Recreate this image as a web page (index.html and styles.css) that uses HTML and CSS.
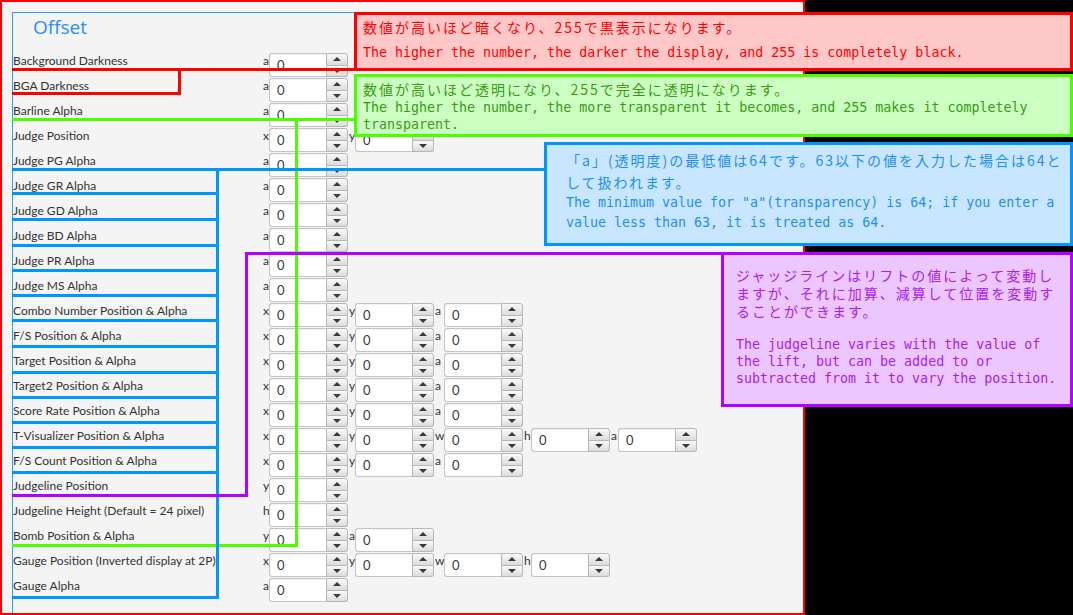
FILE: index.html
```html
<!DOCTYPE html>
<html lang="ja">
<head>
<meta charset="utf-8">
<title>Offset</title>
<link rel="stylesheet" href="styles.css">
</head>
<body>
<div class="stage">
  <div class="panel">
    <div class="pane">
      <h1 class="title">Offset</h1>
      <div class="form">
        <div class="row"><span class="name">Background Darkness</span><span class="sl">a</span><div class="spin"><div class="field">0</div><div class="btns"><div class="b up"><i></i></div><div class="b dn"><i></i></div></div></div></div>
        <div class="row"><span class="name">BGA Darkness</span><span class="sl">a</span><div class="spin"><div class="field">0</div><div class="btns"><div class="b up"><i></i></div><div class="b dn"><i></i></div></div></div></div>
        <div class="row"><span class="name">Barline Alpha</span><span class="sl">a</span><div class="spin"><div class="field">0</div><div class="btns"><div class="b up"><i></i></div><div class="b dn"><i></i></div></div></div></div>
        <div class="row"><span class="name">Judge Position</span><span class="sl">x</span><div class="spin"><div class="field">0</div><div class="btns"><div class="b up"><i></i></div><div class="b dn"><i></i></div></div></div><span class="sl">y</span><div class="spin"><div class="field">0</div><div class="btns"><div class="b up"><i></i></div><div class="b dn"><i></i></div></div></div></div>
        <div class="row"><span class="name">Judge PG Alpha</span><span class="sl">a</span><div class="spin"><div class="field">0</div><div class="btns"><div class="b up"><i></i></div><div class="b dn"><i></i></div></div></div></div>
        <div class="row"><span class="name">Judge GR Alpha</span><span class="sl">a</span><div class="spin"><div class="field">0</div><div class="btns"><div class="b up"><i></i></div><div class="b dn"><i></i></div></div></div></div>
        <div class="row"><span class="name">Judge GD Alpha</span><span class="sl">a</span><div class="spin"><div class="field">0</div><div class="btns"><div class="b up"><i></i></div><div class="b dn"><i></i></div></div></div></div>
        <div class="row"><span class="name">Judge BD Alpha</span><span class="sl">a</span><div class="spin"><div class="field">0</div><div class="btns"><div class="b up"><i></i></div><div class="b dn"><i></i></div></div></div></div>
        <div class="row"><span class="name">Judge PR Alpha</span><span class="sl">a</span><div class="spin"><div class="field">0</div><div class="btns"><div class="b up"><i></i></div><div class="b dn"><i></i></div></div></div></div>
        <div class="row"><span class="name">Judge MS Alpha</span><span class="sl">a</span><div class="spin"><div class="field">0</div><div class="btns"><div class="b up"><i></i></div><div class="b dn"><i></i></div></div></div></div>
        <div class="row"><span class="name">Combo Number Position &amp; Alpha</span><span class="sl">x</span><div class="spin"><div class="field">0</div><div class="btns"><div class="b up"><i></i></div><div class="b dn"><i></i></div></div></div><span class="sl">y</span><div class="spin"><div class="field">0</div><div class="btns"><div class="b up"><i></i></div><div class="b dn"><i></i></div></div></div><span class="sl">a</span><div class="spin"><div class="field">0</div><div class="btns"><div class="b up"><i></i></div><div class="b dn"><i></i></div></div></div></div>
        <div class="row"><span class="name">F/S Position &amp; Alpha</span><span class="sl">x</span><div class="spin"><div class="field">0</div><div class="btns"><div class="b up"><i></i></div><div class="b dn"><i></i></div></div></div><span class="sl">y</span><div class="spin"><div class="field">0</div><div class="btns"><div class="b up"><i></i></div><div class="b dn"><i></i></div></div></div><span class="sl">a</span><div class="spin"><div class="field">0</div><div class="btns"><div class="b up"><i></i></div><div class="b dn"><i></i></div></div></div></div>
        <div class="row"><span class="name">Target Position &amp; Alpha</span><span class="sl">x</span><div class="spin"><div class="field">0</div><div class="btns"><div class="b up"><i></i></div><div class="b dn"><i></i></div></div></div><span class="sl">y</span><div class="spin"><div class="field">0</div><div class="btns"><div class="b up"><i></i></div><div class="b dn"><i></i></div></div></div><span class="sl">a</span><div class="spin"><div class="field">0</div><div class="btns"><div class="b up"><i></i></div><div class="b dn"><i></i></div></div></div></div>
        <div class="row"><span class="name">Target2 Position &amp; Alpha</span><span class="sl">x</span><div class="spin"><div class="field">0</div><div class="btns"><div class="b up"><i></i></div><div class="b dn"><i></i></div></div></div><span class="sl">y</span><div class="spin"><div class="field">0</div><div class="btns"><div class="b up"><i></i></div><div class="b dn"><i></i></div></div></div><span class="sl">a</span><div class="spin"><div class="field">0</div><div class="btns"><div class="b up"><i></i></div><div class="b dn"><i></i></div></div></div></div>
        <div class="row"><span class="name">Score Rate Position &amp; Alpha</span><span class="sl">x</span><div class="spin"><div class="field">0</div><div class="btns"><div class="b up"><i></i></div><div class="b dn"><i></i></div></div></div><span class="sl">y</span><div class="spin"><div class="field">0</div><div class="btns"><div class="b up"><i></i></div><div class="b dn"><i></i></div></div></div><span class="sl">a</span><div class="spin"><div class="field">0</div><div class="btns"><div class="b up"><i></i></div><div class="b dn"><i></i></div></div></div></div>
        <div class="row"><span class="name">T-Visualizer Position &amp; Alpha</span><span class="sl">x</span><div class="spin"><div class="field">0</div><div class="btns"><div class="b up"><i></i></div><div class="b dn"><i></i></div></div></div><span class="sl">y</span><div class="spin"><div class="field">0</div><div class="btns"><div class="b up"><i></i></div><div class="b dn"><i></i></div></div></div><span class="sl">w</span><div class="spin"><div class="field">0</div><div class="btns"><div class="b up"><i></i></div><div class="b dn"><i></i></div></div></div><span class="sl">h</span><div class="spin"><div class="field">0</div><div class="btns"><div class="b up"><i></i></div><div class="b dn"><i></i></div></div></div><span class="sl">a</span><div class="spin"><div class="field">0</div><div class="btns"><div class="b up"><i></i></div><div class="b dn"><i></i></div></div></div></div>
        <div class="row"><span class="name">F/S Count Position &amp; Alpha</span><span class="sl">x</span><div class="spin"><div class="field">0</div><div class="btns"><div class="b up"><i></i></div><div class="b dn"><i></i></div></div></div><span class="sl">y</span><div class="spin"><div class="field">0</div><div class="btns"><div class="b up"><i></i></div><div class="b dn"><i></i></div></div></div><span class="sl">a</span><div class="spin"><div class="field">0</div><div class="btns"><div class="b up"><i></i></div><div class="b dn"><i></i></div></div></div></div>
        <div class="row"><span class="name">Judgeline Position</span><span class="sl">y</span><div class="spin"><div class="field">0</div><div class="btns"><div class="b up"><i></i></div><div class="b dn"><i></i></div></div></div></div>
        <div class="row"><span class="name">Judgeline Height (Default = 24 pixel)</span><span class="sl">h</span><div class="spin"><div class="field">0</div><div class="btns"><div class="b up"><i></i></div><div class="b dn"><i></i></div></div></div></div>
        <div class="row"><span class="name">Bomb Position &amp; Alpha</span><span class="sl">y</span><div class="spin"><div class="field">0</div><div class="btns"><div class="b up"><i></i></div><div class="b dn"><i></i></div></div></div><span class="sl">a</span><div class="spin"><div class="field">0</div><div class="btns"><div class="b up"><i></i></div><div class="b dn"><i></i></div></div></div></div>
        <div class="row"><span class="name">Gauge Position (Inverted display at 2P)</span><span class="sl">x</span><div class="spin"><div class="field">0</div><div class="btns"><div class="b up"><i></i></div><div class="b dn"><i></i></div></div></div><span class="sl">y</span><div class="spin"><div class="field">0</div><div class="btns"><div class="b up"><i></i></div><div class="b dn"><i></i></div></div></div><span class="sl">w</span><div class="spin"><div class="field">0</div><div class="btns"><div class="b up"><i></i></div><div class="b dn"><i></i></div></div></div><span class="sl">h</span><div class="spin"><div class="field">0</div><div class="btns"><div class="b up"><i></i></div><div class="b dn"><i></i></div></div></div></div>
        <div class="row"><span class="name">Gauge Alpha</span><span class="sl">a</span><div class="spin"><div class="field">0</div><div class="btns"><div class="b up"><i></i></div><div class="b dn"><i></i></div></div></div></div>
      </div>
    </div>
  </div>

  <!-- annotation connectors -->
  <div class="ln red-top"></div>
  <div class="ln red-box"></div>
  <div class="ln green-top"></div>
  <div class="ln green-box"></div>
  <div class="ln blue-top"></div>
  <div class="ln blue-box">
    <div class="cell s"></div>
    <div class="cell t"></div>
    <div class="cell t"></div>
    <div class="cell"></div>
    <div class="cell"></div>
    <div class="cell"></div>
    <div class="cell t"></div>
    <div class="cell t"></div>
    <div class="cell"></div>
    <div class="cell"></div>
    <div class="cell"></div>
    <div class="cell"></div>
  </div>
  <div class="ln purple-box"></div>
  <div class="ln purple-bottom"></div>

  <!-- annotation notes -->
  <div class="note note-red">
    <div class="jp">数値が高いほど暗くなり、255で黒表示になります。</div>
    <div class="en">The higher the number, the darker the display, and 255 is completely black.</div>
  </div>
  <div class="note note-green">
    <div class="jp">数値が高いほど透明になり、255で完全に透明になります。</div>
    <div class="en">The higher the number, the more transparent it becomes, and 255 makes it completely<br>transparent.</div>
  </div>
  <div class="note note-blue">
    <div class="jp">「a」(透明度)の最低値は64です。63以下の値を入力した場合は64と<br>して扱われます。</div>
    <div class="en">The minimum value for "a"(transparency) is 64; if you enter a<br>value less than 63, it is treated as 64.</div>
  </div>
  <div class="note note-purple">
    <div class="jp">ジャッジラインはリフトの値によって変動し<br>ますが、それに加算、減算して位置を変動す<br>ることができます。</div>
    <div class="en">The judgeline varies with the value of<br>the lift, but can be added to or<br>subtracted from it to vary the position.</div>
  </div>
</div>
</body>
</html>
```

FILE: styles.css
```css
* { box-sizing: border-box; }
html, body { margin: 0; padding: 0; }
body {
  background: #000;
  width: 1073px;
  height: 615px;
  overflow: hidden;
  font-family: Lato, "Liberation Sans", sans-serif;
}
.stage { position: relative; width: 1073px; height: 615px; background: #000; }

/* ---------- the settings panel ---------- */
.panel {
  width: 805px;
  height: 615px;
  border: 2px solid #ff0000;
  background: #f4f4f4;
  padding: 10px 0 0 10px;
}
.pane {
  height: 100%;
  border-left: 1px solid #2fa2e6;
  border-top: 1px solid #2fa2e6;
}
.title {
  margin: 0;
  height: 40px;
  padding: 1px 0 0 20px;
  font: normal 19px/26px "Open Sans", sans-serif;
  color: #2a8ef3;
}
.row {
  display: grid;
  grid-template-columns: 250px 6px 80px 6px 80px 9px 80px 7px 80px 7px 80px;
  align-items: start;
  height: 25px;
  font-size: 12px;
  line-height: 16px;
  color: #333;
}
.name, .sl { white-space: nowrap; }

.spin { display: flex; width: 79px; height: 24px; }
.field {
  flex: 1;
  background: #fff;
  border: 1px solid #c4c4c4;
  border-right: none;
  border-radius: 3px 0 0 3px;
  box-shadow: inset 0 1px 1px rgba(0, 0, 0, 0.05);
  padding-left: 7px;
  font-size: 13px;
  line-height: 22px;
  color: #3a3a3a;
}
.btns { width: 22px; display: flex; flex-direction: column; }
.b {
  flex: 1;
  display: flex;
  align-items: center;
  justify-content: center;
  border: 1px solid #b7b7b7;
  background: linear-gradient(#f9f9f9, #dcdcdc);
}
.b.up { border-radius: 0 3px 0 0; }
.b.dn { border-top: none; border-radius: 0 0 3px 0; }
.b i {
  display: block;
  width: 0;
  height: 0;
  border-left: 4px solid transparent;
  border-right: 4px solid transparent;
}
.b.up i { border-bottom: 4px solid #3a3a3a; }
.b.dn i { border-top: 4px solid #3a3a3a; }

/* ---------- annotation connector lines ---------- */
.ln { position: absolute; }
.red-top { left: 12px; top: 68px; width: 343px; height: 3px; background: #ff0000; }
.red-box { left: 12px; top: 68px; width: 169px; height: 27px; border-right: 3px solid #ff0000; border-bottom: 3px solid #ff0000; }
.green-top { left: 12px; top: 118px; width: 343px; height: 3px; background: #4cff00; }
.green-box { left: 12px; top: 118px; width: 286px; height: 429px; border-right: 3px solid #4cff00; border-bottom: 3px solid #4cff00; }
.blue-top { left: 12px; top: 168px; width: 533px; height: 3px; background: #0096ff; }
.blue-box { left: 12px; top: 168px; width: 207px; height: 431px; padding-top: 3px; border-right: 3px solid #0096ff; border-bottom: 3px solid #0096ff; }
.cell { height: 25px; border-bottom: 3px solid #0096ff; }
.cell.s { height: 24px; }
.cell.t { height: 26px; }
.purple-box { left: 245px; top: 252px; width: 477px; height: 245px; border-top: 3px solid #b400ff; border-left: 3px solid #b400ff; }
.purple-bottom { left: 12px; top: 494px; width: 236px; height: 3px; background: #b400ff; }

/* ---------- annotation notes ---------- */
.note {
  position: absolute;
  right: 0;
  border: 3px solid;
  white-space: nowrap;
}
.jp { font-family: "Noto Sans CJK JP", sans-serif; font-size: 14px; letter-spacing: 2px; }
.en { font-family: "DejaVu Sans Mono", monospace; font-size: 13.3px; }

.note-red { left: 354px; top: 12px; height: 59px; padding: 2px 6px 0; border-color: #ff0000; background: #ffc8c8; color: #ff0000; }
.note-red .jp { line-height: 20px; }
.note-red .en { line-height: 17px; margin-top: 7px; }

.note-green { left: 354px; top: 74px; height: 63px; padding: 2px 6px 0; border-color: #4cff00; background: #ccffc2; color: #3a9a14; }
.note-green .jp { line-height: 20px; }
.note-green .en { line-height: 17px; }

.note-blue { left: 544px; top: 142px; height: 104px; padding: 4px 19px 0; border-color: #0096ff; background: #c8e6ff; color: #1d8ff2; }
.note-blue .jp { line-height: 22px; }
.note-blue .en { line-height: 20px; }

.note-purple { left: 721px; top: 252px; height: 155px; padding: 11px 12px 0; border-color: #b400ff; background: #ebc6ff; color: #a81ef0; }
.note-purple .jp { line-height: 18px; }
.note-purple .en { line-height: 17px; margin-top: 16px; }
```
